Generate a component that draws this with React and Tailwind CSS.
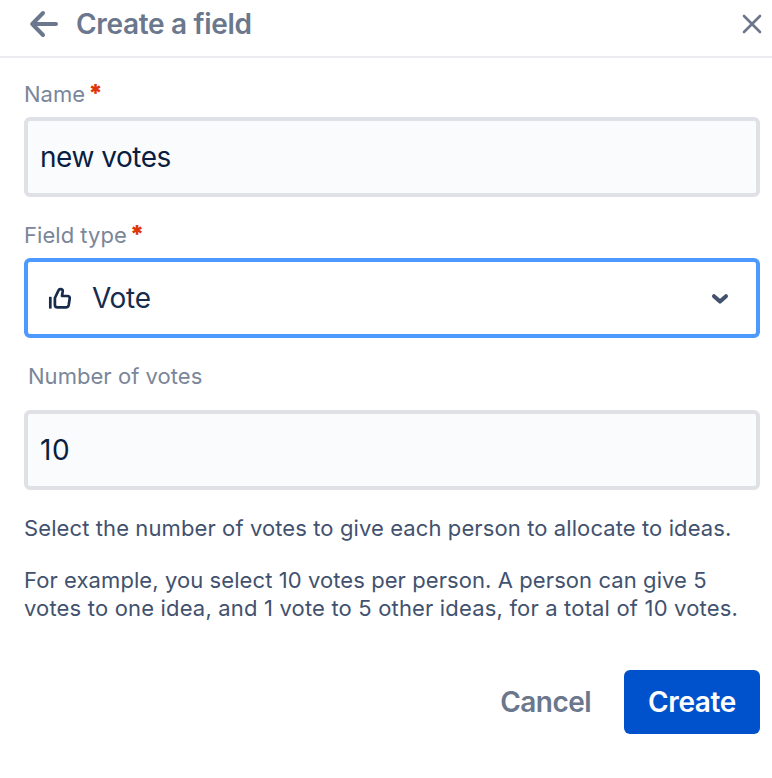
import React, { useState } from 'react';

const inputClass =
  'block w-full h-20 rounded-[6px] border-4 border-[#dfe1e6] bg-[#fafbfc] px-3 text-[28px] text-[#091e42] outline-none';

function Label({ children, required }) {
  return (
    <div className="flex h-7 items-center text-[22px] leading-7 tracking-[0.04px] text-[#7a869a]">
      {children}
      {required && <span className="ml-[3px] text-[24px] font-black text-[#de350b]">*</span>}
    </div>
  );
}

export default function App() {
  const [name, setName] = useState('new votes');
  const [votes, setVotes] = useState('10');

  return (
    <div className="h-[778px] w-[772px] overflow-hidden bg-white font-['Inter',sans-serif] text-[#42526e]">
      <header className="flex h-[58px] items-start justify-between border-b-2 border-[#ebecf0] pl-[29px] pr-[10px]">
        <div className="flex h-12 items-center">
          <svg width="30" height="30" viewBox="0 0 30 30" fill="none" stroke="#6b778c" strokeWidth="4" strokeLinecap="round" strokeLinejoin="round">
            <path d="M3.2 15H27M14 4L3.2 15L14 26" />
          </svg>
          <h1 className="ml-[17px] text-[28px] font-semibold tracking-[-0.31px] text-[#6b778c]">Create a field</h1>
        </div>
        <button className="flex h-12 items-center" aria-label="Close">
          <svg width="20" height="20" viewBox="0 0 20 20" fill="none" stroke="#6b778c" strokeWidth="2.6" strokeLinecap="round">
            <path d="M2 2L18 18M18 2L2 18" />
          </svg>
        </button>
      </header>

      <main className="pl-6 pr-3 pt-[22px]">
        <Label required>Name</Label>
        <input className={`${inputClass} mt-[9px] tracking-[-0.48px]`} value={name} onChange={(e) => setName(e.target.value)} />

        <div className="mt-6">
          <Label required>Field type</Label>
        </div>
        <button className="mt-[9px] flex h-20 w-full items-center rounded-[6px] border-4 border-[#4c9aff] bg-white pl-5 pr-[26px] text-[28px] text-[#172b4d]">
          <svg width="24" height="24" viewBox="0 0 24 24" fill="none" stroke="#172b4d" strokeWidth="2.7" strokeLinecap="round" strokeLinejoin="round">
            <path strokeLinecap="butt" d="M2.3 10.8V22.6" />
            <path d="M6.9 12L10.4 4.6C11.4 2.2 15 2.8 14.7 5.4L14 10H19.4C21.2 10 22 11.2 21.7 12.7L20.7 19C20.4 20.6 19.6 21.3 18 21.3H9.3C7.7 21.3 6.9 20.5 6.9 19Z" />
          </svg>
          <span className="ml-5 flex-1 text-left tracking-[-0.3px]">Vote</span>
          <svg className="relative top-px" width="20" height="20" viewBox="0 0 20 20" fill="none" stroke="#42526e" strokeWidth="4" strokeLinecap="round" strokeLinejoin="round">
            <path d="M4 7.2L10 12.6L16 7.2" />
          </svg>
        </button>

        <div className="mt-6 pl-1">
          <Label>Number of votes</Label>
        </div>
        <input className={`${inputClass} mt-5 tracking-[0.5px]`} value={votes} onChange={(e) => setVotes(e.target.value)} />

        <div className="mt-6 whitespace-nowrap text-[22px] leading-7 tracking-[0.1px]">
          <p>Select the number of votes to give each person to allocate to ideas.</p>
          <p className="mt-6">
            <span className="tracking-[0.08px]">For example, you select 10 votes per person. A person can give 5</span>
            <br />
            <span className="tracking-[0.17px]">votes to one idea, and 1 vote to 5 other ideas, for a total of 10 votes.</span>
          </p>
        </div>
      </main>

      <footer className="mt-12 flex justify-end pr-3 text-[28px] font-semibold tracking-[-0.4px]">
        <button className="h-16 pl-8 pr-[33px] tracking-[-0.55px] text-[#6b778c]">Cancel</button>
        <button className="h-16 w-[136px] rounded-[6px] bg-[#0052cc] text-white">Create</button>
      </footer>
    </div>
  );
}
